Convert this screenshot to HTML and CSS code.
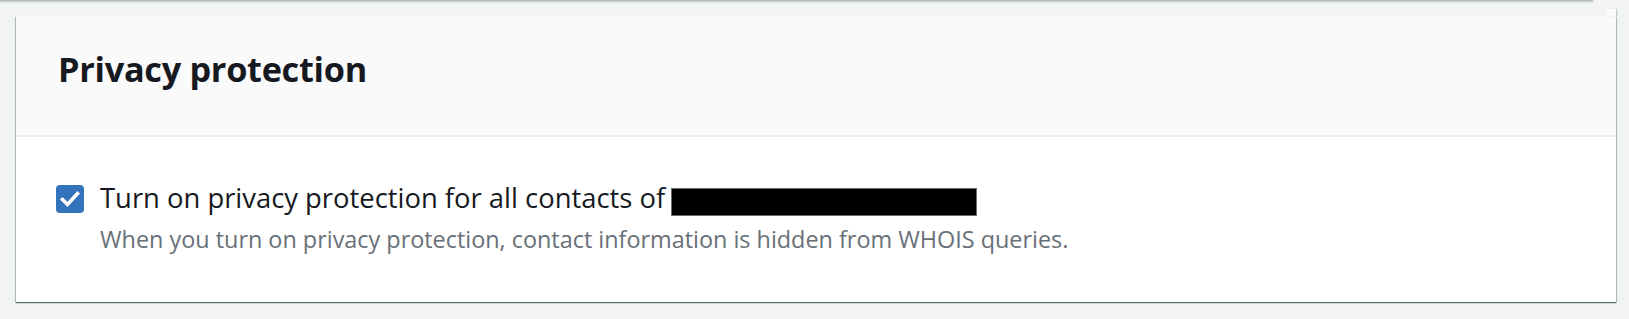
FILE: index.html
```html
<!DOCTYPE html>
<html lang="en">
<head>
<meta charset="utf-8">
<title>Privacy protection</title>
<link rel="stylesheet" href="styles.css">
</head>
<body>
<div class="prev-edge"></div>
<section class="card">
  <header class="card-header">
    <h2 class="card-title">Privacy protection</h2>
  </header>
  <div class="card-body">
    <label class="check-row">
      <span class="checkbox">
        <svg viewBox="0 0 28 28" width="28" height="28" aria-hidden="true">
          <polyline points="6.5,14.5 11.5,19.5 21.5,8.5" fill="none" stroke="#ffffff" stroke-width="3.6" stroke-linecap="square" stroke-linejoin="miter"/>
        </svg>
      </span>
      <span class="check-text">
        <span class="check-label">Turn on privacy protection for all contacts of <span class="redacted"></span></span>
        <span class="check-desc">When you turn on privacy protection, contact information is hidden from WHOIS queries.</span>
      </span>
    </label>
  </div>
</section>
</body>
</html>
```
FILE: styles.css
```css
html, body {
  margin: 0;
  padding: 0;
}
body {
  background: #f2f3f3;
  font-family: "Open Sans", "Noto Sans", sans-serif;
  color: #16191f;
  height: 319px;
  overflow: hidden;
}
.prev-edge {
  height: 1px;
  background: #b4babc;
  margin-right: 36px;
  box-shadow: 0 1px 2px rgba(0, 28, 36, 0.3);
}
.card {
  position: relative;
  margin: 15px 13px 0 16px;
  background: #ffffff;
  box-shadow: 0 1px 1px 0 rgba(0, 28, 36, 0.45), 1px 1px 1px 0 rgba(0, 28, 36, 0.2), -1px 1px 1px 0 rgba(0, 28, 36, 0.2);
}
.card::before {
  content: "";
  position: absolute;
  top: -7px;
  right: 0;
  width: 9px;
  height: 7px;
  background: #fafafa;
  box-shadow: 1px 0 1px rgba(0, 28, 36, 0.2);
}
.card-header {
  box-sizing: border-box;
  height: 121px;
  background: #fafafa;
  border-bottom: 2px solid #eaeded;
  padding: 33px 0 0 42px;
}
.card-title {
  margin: 0;
  font-size: 34.3px;
  line-height: 40px;
  font-weight: 700;
  letter-spacing: -0.3px;
  color: #16191f;
}
.card-body {
  padding: 45px 40px 49px 40px;
}
.check-row {
  display: flex;
  align-items: flex-start;
  gap: 16px;
}
.checkbox {
  flex: none;
  width: 28px;
  height: 28px;
  margin-top: 3px;
  border-radius: 4px;
  background: #3273bb;
  display: flex;
}
.check-text {
  display: flex;
  flex-direction: column;
}
.check-label {
  font-size: 27.4px;
  line-height: 32px;
  color: #16191f;
  white-space: nowrap;
}
.redacted {
  display: inline-block;
  width: 304px;
  height: 26px;
  background: #000000;
  border: 1px solid #6b6b6b;
  vertical-align: -8px;
  margin-left: -1px;
}
.check-desc {
  margin-top: 9px;
  font-size: 23.4px;
  line-height: 28px;
  color: #687078;
  white-space: nowrap;
}
```
